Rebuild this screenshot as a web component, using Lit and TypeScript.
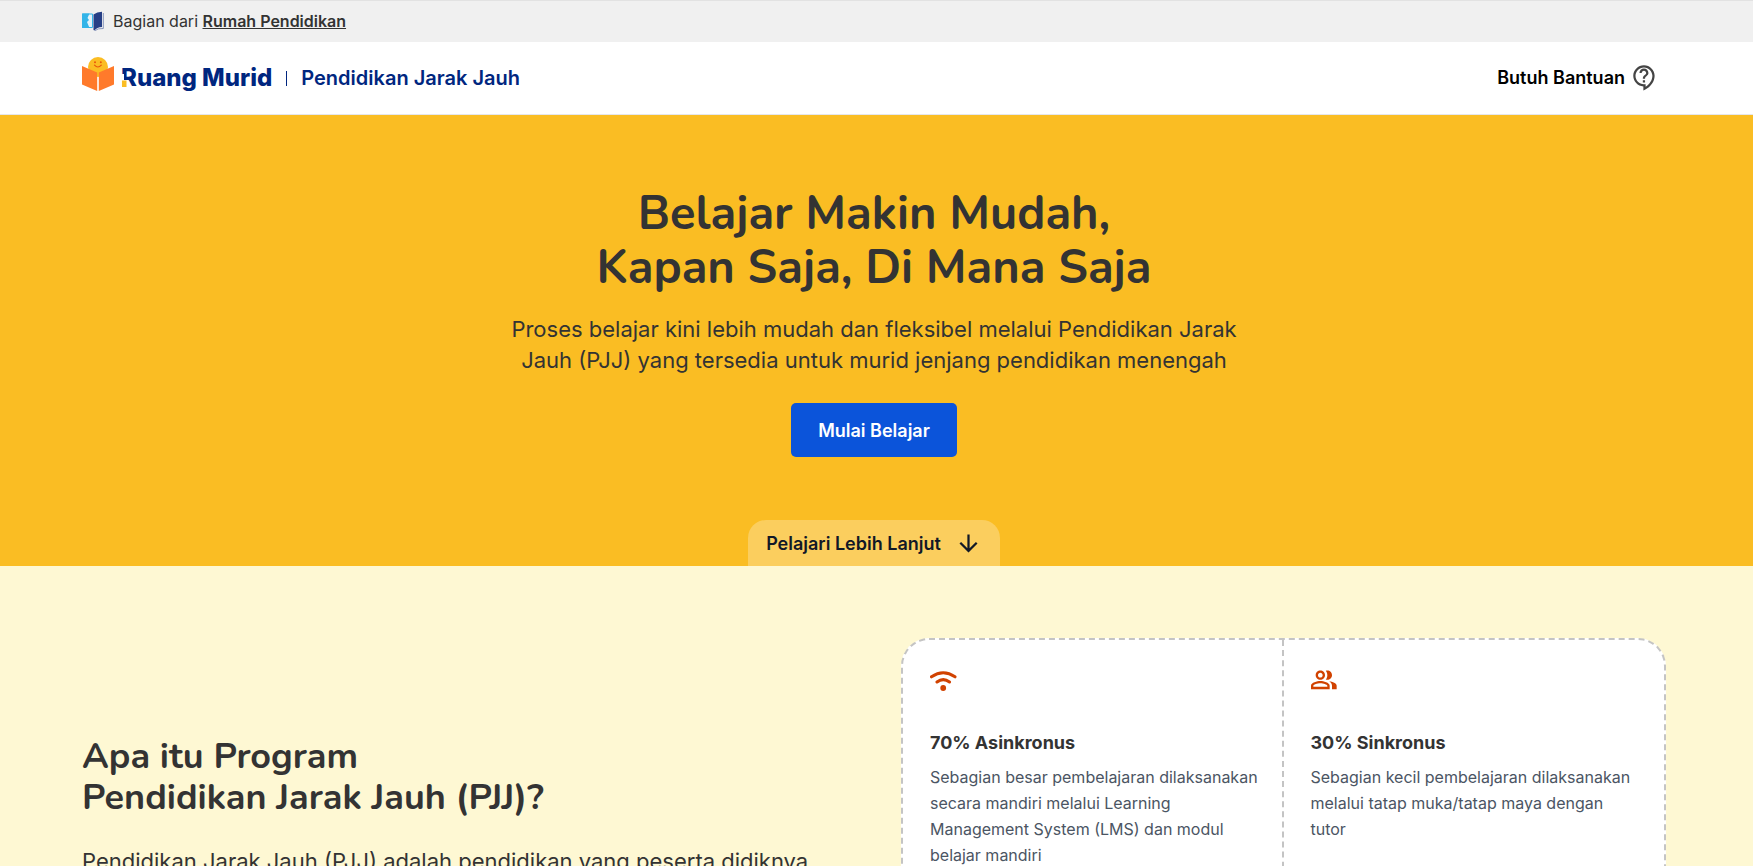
import { LitElement, html, css } from "lit";
import { customElement } from "lit/decorators.js";

@customElement("feature-card")
class FeatureCard extends LitElement {
  static properties = { heading: { type: String }, text: { type: String } };
  declare heading: string;
  declare text: string;
  static styles = css`
    :host { display: block; padding: 27px 23px 40px 27px; }
    h3 { margin: 34px 0 0; font-size: 18px; line-height: 28px; font-weight: 700; color: #333; }
    p { margin: 7px 0 0; font-size: 16px; line-height: 26px; color: #4b5563; }
    ::slotted(svg) { display: block; }
  `;
  render() {
    return html`<slot></slot><h3>${this.heading}</h3><p>${this.text}</p>`;
  }
}

@customElement("app-root")
class AppRoot extends LitElement {
  static styles = css`
    :host {
      display: flex; flex-direction: column; height: 100vh; overflow: hidden;
      font-family: Inter, "Liberation Sans", sans-serif; color: #333; background: #fff;
    }
    a { color: inherit; }
    .topbar, .header, .about { padding-left: 82px; padding-right: 87px; }
    .topbar {
      display: flex; align-items: center; gap: 9px; flex: none; height: 39px; padding-bottom: 2px;
      border-top: 1px solid #e2e2e2; background: #f0f0f0; font-size: 16px;
    }
    .topbar a { font-weight: 600; }
    .header {
      display: flex; align-items: center; justify-content: space-between; flex: none; height: 72px;
      border-bottom: 1px solid #e5e7eb;
    }
    .brand, .help { display: flex; align-items: center; text-decoration: none; }
    .brand { color: #00267f; }
    .wordmark { position: relative; margin-left: 7px; font-size: 24px; line-height: 24px; font-weight: 800; }
    .notch { position: absolute; left: 1px; top: 8px; }
    .rule { width: 1px; height: 15px; margin: 0 14px; background: #00267f; }
    .product { font-size: 20px; font-weight: 600; }
    .help { gap: 6px; margin-right: 8px; padding-bottom: 2px; color: #000; font-size: 18px; font-weight: 600; }
    .hero {
      display: flex; flex-direction: column; align-items: center; flex: none; text-align: center;
      padding: 72px 87px 0 82px; background: #fabd23;
    }
    h1, h2 { margin: 0; font-family: Nunito, "Noto Sans", sans-serif; font-weight: 700; color: #333; }
    h1 { font-size: 47px; line-height: 54px; }
    .lead { margin: 19px 0 0; max-width: 768px; font-size: 22px; line-height: 31px; }
    .start {
      margin: 27px 0 0; padding: 0 27px; height: 54px; border: 0; border-radius: 5px; background: #0b54da;
      color: #fff; font: 600 18px Inter, sans-serif;
    }
    .more {
      display: flex; align-items: center; gap: 14px; margin-top: 63px; padding: 0 18px; height: 46px;
      border-radius: 18px 18px 0 0; background: #fbce5e; color: #111827;
      font-size: 18px; font-weight: 600; text-decoration: none;
    }
    .about {
      display: grid; grid-template-columns: 1fr 1fr; column-gap: 54px; flex: 1; min-height: 0; overflow: hidden;
      padding-top: 72px; background: #fef8d3; align-items: start;
    }
    .intro { padding-top: 98px; }
    h2 { font-size: 36px; line-height: 41px; }
    .intro p { margin: 28px 0 0; font-size: 22px; line-height: 31px; }
    .cards {
      display: grid; grid-template-columns: 1fr 1fr; background: #fff;
      border: 2px dashed #c4c4c4; border-radius: 28px;
    }
    feature-card:first-child { border-right: 2px dashed #c4c4c4; }
  `;
  render() {
    return html`
      <div class="topbar">
        <svg width="22" height="20" viewBox="0 0 22 20" aria-hidden="true">
          <path d="M.5 3h10v13.500H.5z" fill="#e4f3fa" stroke="#32b4e8"/>
          <path d="M0 2.500h7.500L5.500 7l1.500 2-2 2 2.500 6H0z" fill="#32b4e8"/>
          <path d="M11.500 3.500Q15 1 20 .8V16q-5 0-7.500 3.500l-1-.5z" fill="#263f86"/>
          <path d="M21.300 2v15.500q-5.500-.3-8.500 2.200" fill="none" stroke="#7c8bb6" stroke-width=".9"/>
        </svg>
        <span>Bagian dari <a href="#rumah">Rumah Pendidikan</a></span>
      </div>
      <header class="header">
        <a class="brand" href="#home">
          <svg width="32" height="42" viewBox="0 0 32 42" aria-hidden="true">
            <circle cx="16" cy="10" r="10" fill="#fbbd23"/>
            <circle cx="13" cy="5.300" r="1" fill="#e8590c"/><circle cx="18.800" cy="5.300" r="1" fill="#e8590c"/>
            <path d="M12.500 8.200q3.400 3.600 6.800 0" fill="none" stroke="#e8590c" stroke-width="1.200" stroke-linecap="round"/>
            <path d="M0 9l15.200 6.500V34L0 27.500zM16.800 15.500L32 9v18.500L16.800 34z" fill="#ff7a2b"/>
          </svg>
          <span class="wordmark">Ruang Murid<svg class="notch" width="7" height="13" viewBox="0 0 7 13" aria-hidden="true">
            <path d="M0 0h2v6H0zM0 6h6v7H0z" fill="#fff"/><path d="M0 6.500h4.500V13H0z" fill="#fbbd23"/></svg></span>
          <span class="rule"></span>
          <span class="product">Pendidikan Jarak Jauh</span>
        </a>
        <a class="help" href="#help">Butuh Bantuan
          <svg width="27" height="27" viewBox="0 0 24 24" fill="#444" aria-hidden="true"><path d="M11 23.590v-3.600c-5.010-.26-9-4.420-9-9.490C2 5.260 6.260 1 11.500 1S21 5.260 21 10.500c0 4.950-3.440 9.930-8.570 12.400l-1.430.69zM11.500 3C7.360 3 4 6.360 4 10.500S7.360 18 11.500 18H13v2.300c3.640-2.300 6-6.080 6-9.800C19 6.360 15.640 3 11.500 3zm-1 11.500h2v2h-2zm2-1.500h-2c0-3.250 3-3 3-5 0-1.100-.9-2-2-2s-2 .9-2 2h-2c0-2.210 1.790-4 4-4s4 1.790 4 4c0 2.500-3 2.750-3 5z"/></svg>
        </a>
      </header>
      <section class="hero">
        <h1>Belajar Makin Mudah,<br />Kapan Saja, Di Mana Saja</h1>
        <p class="lead">Proses belajar kini lebih mudah dan fleksibel melalui Pendidikan Jarak Jauh (PJJ) yang tersedia untuk murid jenjang pendidikan menengah</p>
        <button class="start">Mulai Belajar</button>
        <a class="more" href="#about">Pelajari Lebih Lanjut
          <svg width="27" height="27" viewBox="0 0 24 24" fill="#111827" aria-hidden="true"><path d="M20 12l-1.410-1.410L13 16.170V4h-2v12.170l-5.580-5.590L4 12l8 8z"/></svg>
        </a>
      </section>
      <section class="about" id="about">
        <div class="intro">
          <h2>Apa itu Program<br />Pendidikan Jarak Jauh (PJJ)?</h2>
          <p>Pendidikan Jarak Jauh (PJJ) adalah pendidikan yang peserta didiknya</p>
        </div>
        <div class="cards">
          <feature-card heading="70% Asinkronus" text="Sebagian besar pembelajaran dilaksanakan secara mandiri melalui Learning Management System (LMS) dan modul belajar mandiri">
            <svg width="28" height="28" viewBox="0 0 28 28" fill="none" stroke="#d14200" stroke-width="3" stroke-linecap="round" aria-hidden="true"><path d="M1.500 9.800q11.700-8 23.500 0M7 15q6.200-4.800 12.500 0"/><circle cx="13.200" cy="21" r="2.900" fill="#d14200" stroke="none"/></svg>
          </feature-card>
          <feature-card heading="30% Sinkronus" text="Sebagian kecil pembelajaran dilaksanakan melalui tatap muka/tatap maya dengan tutor">
            <svg width="28" height="28" viewBox="1 1 24 24" fill="#d14200" aria-hidden="true"><path d="M16.670 13.130C18.040 14.060 19 15.320 19 17v3h4v-3c0-2.180-3.570-3.470-6.330-3.870zM15 12c2.210 0 4-1.790 4-4s-1.790-4-4-4c-.47 0-.91.1-1.330.24C14.500 5.270 15 6.580 15 8s-.5 2.730-1.330 3.760c.42.14.86.24 1.330.24zM9 12c2.210 0 4-1.790 4-4s-1.790-4-4-4-4 1.790-4 4 1.790 4 4 4zm0-6c1.100 0 2 .9 2 2s-.9 2-2 2-2-.9-2-2 .9-2 2-2zM9 13c-2.670 0-8 1.340-8 4v3h16v-3c0-2.660-5.330-4-8-4zm6 5H3v-.99C3.200 16.290 6.300 15 9 15s5.800 1.290 6 2v1z"/></svg>
          </feature-card>
        </div>
      </section>
    `;
  }
}
